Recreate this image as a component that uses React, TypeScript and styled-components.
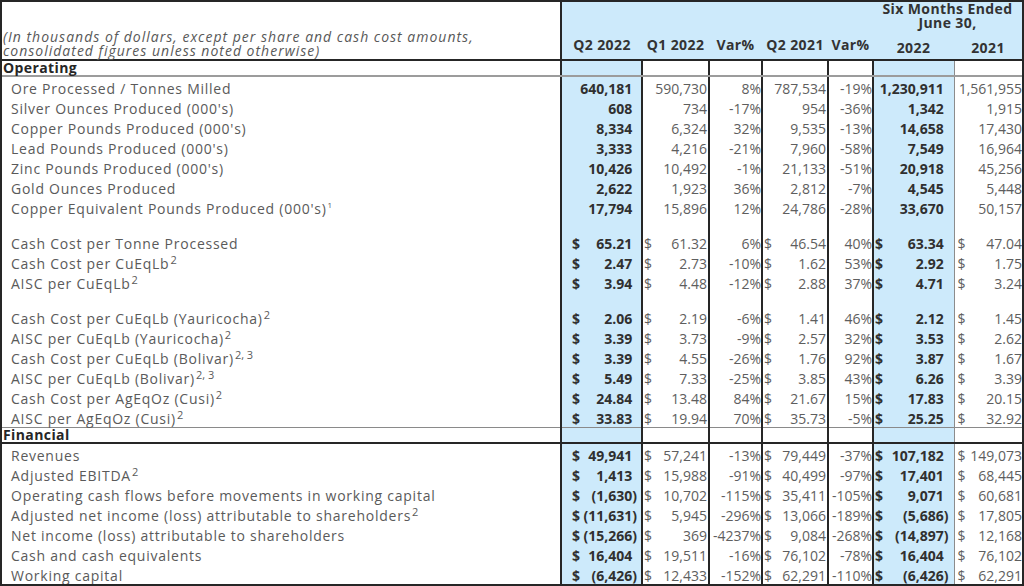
import React from "react";
import styled, { createGlobalStyle, css } from "styled-components";

const BLUE = "#cdeafb";
const DARK = "#262626";
const GRID = `2px solid ${DARK}`;

const GlobalStyle = createGlobalStyle`
  html, body { margin: 0; padding: 0; background: #ffffff; }
  body { font-family: "Open Sans", "Liberation Sans", sans-serif; }
`;

type ColSpec = { w: number; bold: boolean; blue: boolean; pl: number; pr: number; light?: boolean; pct?: boolean };

const COLS: ColSpec[] = [
  { w: 81, bold: true, blue: true, pl: 10, pr: 4 },
  { w: 67, bold: false, blue: false, pl: 1, pr: 1 },
  { w: 53, bold: false, blue: false, pl: 1, pr: 0, pct: true },
  { w: 66, bold: false, blue: false, pl: 1, pr: 1 },
  { w: 45, bold: false, blue: false, pl: 1, pr: 0, pct: true },
  { w: 81, bold: true, blue: true, pl: 1, pr: 5 },
  { w: 68, bold: false, blue: false, pl: 3, pr: 0, light: true },
];

type DataRow = { kind: "data"; label: string; sup?: string; supSmall?: boolean; dollar?: boolean; values: string[] };
type Row = DataRow | { kind: "spacer"; h: number } | { kind: "section"; label: string; variant: "first" | "second"; h: number };

const ROWS: Row[] = [
  { kind: "section", label: "Operating", variant: "first", h: 16 },
  { kind: "data", label: "Ore Processed / Tonnes Milled", values: ["640,181", "590,730", "8%", "787,534", "-19%", "1,230,911", "1,561,955"] },
  { kind: "data", label: "Silver Ounces Produced (000's)", values: ["608", "734", "-17%", "954", "-36%", "1,342", "1,915"] },
  { kind: "data", label: "Copper Pounds Produced (000's)", values: ["8,334", "6,324", "32%", "9,535", "-13%", "14,658", "17,430"] },
  { kind: "data", label: "Lead Pounds Produced (000's)", values: ["3,333", "4,216", "-21%", "7,960", "-58%", "7,549", "16,964"] },
  { kind: "data", label: "Zinc Pounds Produced (000's)", values: ["10,426", "10,492", "-1%", "21,133", "-51%", "20,918", "45,256"] },
  { kind: "data", label: "Gold Ounces Produced", values: ["2,622", "1,923", "36%", "2,812", "-7%", "4,545", "5,448"] },
  { kind: "data", label: "Copper Equivalent Pounds Produced (000's)", sup: "1", supSmall: true, values: ["17,794", "15,896", "12%", "24,786", "-28%", "33,670", "50,157"] },
  { kind: "spacer", h: 15 },
  { kind: "data", label: "Cash Cost per Tonne Processed", dollar: true, values: ["65.21", "61.32", "6%", "46.54", "40%", "63.34", "47.04"] },
  { kind: "data", label: "Cash Cost per CuEqLb", sup: "2", dollar: true, values: ["2.47", "2.73", "-10%", "1.62", "53%", "2.92", "1.75"] },
  { kind: "data", label: "AISC per CuEqLb", sup: "2", dollar: true, values: ["3.94", "4.48", "-12%", "2.88", "37%", "4.71", "3.24"] },
  { kind: "spacer", h: 15 },
  { kind: "data", label: "Cash Cost per CuEqLb (Yauricocha)", sup: "2", dollar: true, values: ["2.06", "2.19", "-6%", "1.41", "46%", "2.12", "1.45"] },
  { kind: "data", label: "AISC per CuEqLb (Yauricocha)", sup: "2", dollar: true, values: ["3.39", "3.73", "-9%", "2.57", "32%", "3.53", "2.62"] },
  { kind: "data", label: "Cash Cost per CuEqLb (Bolivar)", sup: "2, 3", dollar: true, values: ["3.39", "4.55", "-26%", "1.76", "92%", "3.87", "1.67"] },
  { kind: "data", label: "AISC per CuEqLb (Bolivar)", sup: "2, 3", dollar: true, values: ["5.49", "7.33", "-25%", "3.85", "43%", "6.26", "3.39"] },
  { kind: "data", label: "Cash Cost per AgEqOz (Cusi)", sup: "2", dollar: true, values: ["24.84", "13.48", "84%", "21.67", "15%", "17.83", "20.15"] },
  { kind: "data", label: "AISC per AgEqOz (Cusi)", sup: "2", dollar: true, values: ["33.83", "19.94", "70%", "35.73", "-5%", "25.25", "32.92"] },
  { kind: "section", label: "Financial", variant: "second", h: 15 },
  { kind: "data", label: "Revenues", dollar: true, values: ["49,941", "57,241", "-13%", "79,449", "-37%", "107,182", "149,073"] },
  { kind: "data", label: "Adjusted EBITDA", sup: "2", dollar: true, values: ["1,413", "15,988", "-91%", "40,499", "-97%", "17,401", "68,445"] },
  { kind: "data", label: "Operating cash flows before movements in working capital", dollar: true, values: ["(1,630)", "10,702", "-115%", "35,411", "-105%", "9,071", "60,681"] },
  { kind: "data", label: "Adjusted net income (loss) attributable to shareholders", sup: "2", dollar: true, values: ["(11,631)", "5,945", "-296%", "13,066", "-189%", "(5,686)", "17,805"] },
  { kind: "data", label: "Net income (loss) attributable to shareholders", dollar: true, values: ["(15,266)", "369", "-4237%", "9,084", "-268%", "(14,897)", "12,168"] },
  { kind: "data", label: "Cash and cash equivalents", dollar: true, values: ["16,404", "19,511", "-16%", "76,102", "-78%", "16,404", "76,102"] },
  { kind: "data", label: "Working capital", dollar: true, values: ["(6,426)", "12,433", "-152%", "62,291", "-110%", "(6,426)", "62,291"] },
];

const Frame = styled.div`
  width: 1024px;
  box-sizing: border-box;
  border: ${GRID};
  overflow: hidden;
`;

const Table = styled.table`
  width: 100%;
  border-collapse: collapse;
  table-layout: fixed;
  font-size: 14px;
`;

const HeadRow = styled.tr<{ $h: number }>`
  height: ${(p) => p.$h}px;
`;

const NoteCell = styled.th`
  padding: 0 0 1px 1px;
  text-align: left;
  vertical-align: bottom;
  font-style: italic;
  font-weight: 400;
  font-size: 14px;
  line-height: 14px;
  letter-spacing: 1px;
  color: #585858;
  border-right: ${GRID};
  border-bottom: ${GRID};
  white-space: nowrap;
`;

const HeadCell = styled.th<{ $pb: number; $top?: boolean; $bottomLine?: boolean }>`
  background: ${BLUE};
  padding: 0 0 ${(p) => p.$pb}px 0;
  text-align: center;
  vertical-align: ${(p) => (p.$top ? "top" : "bottom")};
  font-weight: 700;
  font-size: 14px;
  line-height: 14px;
  letter-spacing: 0.4px;
  color: #333333;
  white-space: nowrap;
  ${(p) =>
    p.$bottomLine &&
    css`
      border-bottom: ${GRID};
    `}
`;

const BodyRow = styled.tr<{ $h: number }>`
  height: ${(p) => p.$h}px;
`;

const sectionFirst = css`
  border-bottom: 2px solid #9c9c9c;
`;
const sectionSecond = css`
  border-top: 1px solid #8a8a8a;
  border-bottom: ${GRID};
`;

const LabelCell = styled.td<{ $section?: "first" | "second" }>`
  padding: 4px 0 0 9px;
  vertical-align: top;
  border-right: ${GRID};
  color: #5a5a5a;
  line-height: 16px;
  letter-spacing: 0.75px;
  white-space: nowrap;
  overflow: visible;
  ${(p) =>
    p.$section &&
    css`
      padding: 0 0 0 1px;
      vertical-align: middle;
      font-weight: 700;
      color: #262626;
      line-height: 14px;
      letter-spacing: 0.4px;
    `}
  ${(p) => p.$section === "first" && sectionFirst}
  ${(p) => p.$section === "second" && sectionSecond}
`;

const ValueCell = styled.td<{ $spec: ColSpec; $section?: "first" | "second" }>`
  background: ${(p) => (p.$spec.blue ? BLUE : "#ffffff")};
  border-left: ${(p) => (p.$spec.light ? "1px solid #8c8c8c" : GRID)};
  padding: 4px ${(p) => p.$spec.pr}px 0 ${(p) => p.$spec.pl}px;
  vertical-align: top;
  font-weight: ${(p) => (p.$spec.bold ? 700 : 400)};
  color: ${(p) => (p.$spec.bold ? "#303030" : "#5e5e5e")};
  white-space: nowrap;
  overflow: visible;
  ${(p) => p.$section && css`padding-top: 0;`}
  ${(p) => p.$section === "first" && sectionFirst}
  ${(p) => p.$section === "second" && sectionSecond}
`;

const Amount = styled.div`
  display: flex;
  justify-content: flex-end;
  align-items: baseline;
  line-height: 16px;
`;

const Dollar = styled.span`
  flex: none;
  margin-right: auto;
  padding-right: 3px;
`;

const Num = styled.span`
  flex: none;
`;

const Ghost = styled.span`
  visibility: hidden;
`;

const Sup = styled.sup<{ $small?: boolean }>`
  font-size: ${(p) => (p.$small ? 8 : 11)}px;
  line-height: 0;
  letter-spacing: 0;
  vertical-align: ${(p) => (p.$small ? 6 : 5)}px;
  margin-left: 1px;
`;

function Value({ spec, value, dollar }: { spec: ColSpec; value: string; dollar?: boolean }) {
  const neg = value.endsWith(")");
  return (
    <Amount>
      {dollar && !spec.pct && <Dollar>$</Dollar>}
      <Num>
        {value}
        {spec.bold && !neg && <Ghost>)</Ghost>}
      </Num>
    </Amount>
  );
}

export default function App() {
  return (
    <>
      <GlobalStyle />
      <Frame>
        <Table>
          <colgroup>
            <col style={{ width: 559 }} />
            {COLS.map((c, i) => (
              <col key={i} style={{ width: c.w }} />
            ))}
          </colgroup>
          <thead>
            <HeadRow $h={31}>
              <NoteCell rowSpan={2}>
                (In thousands of dollars, except per share and cash cost amounts,
                <br />
                consolidated figures unless noted otherwise)
              </NoteCell>
              <HeadCell rowSpan={2} $pb={7} $bottomLine>Q2 2022</HeadCell>
              <HeadCell rowSpan={2} $pb={7} $bottomLine>Q1 2022</HeadCell>
              <HeadCell rowSpan={2} $pb={7} $bottomLine>Var%</HeadCell>
              <HeadCell rowSpan={2} $pb={7} $bottomLine>Q2 2021</HeadCell>
              <HeadCell rowSpan={2} $pb={7} $bottomLine>Var%</HeadCell>
              <HeadCell colSpan={2} $pb={0} $top>
                Six Months Ended
                <br />
                June 30,
              </HeadCell>
            </HeadRow>
            <HeadRow $h={27}>
              <HeadCell $pb={4} $bottomLine>2022</HeadCell>
              <HeadCell $pb={4} $bottomLine>2021</HeadCell>
            </HeadRow>
          </thead>
          <tbody>
            {ROWS.map((r, i) => {
              if (r.kind === "spacer") {
                return (
                  <BodyRow key={i} $h={r.h}>
                    <LabelCell />
                    {COLS.map((c, j) => (
                      <ValueCell key={j} $spec={c} />
                    ))}
                  </BodyRow>
                );
              }
              if (r.kind === "section") {
                return (
                  <BodyRow key={i} $h={r.h}>
                    <LabelCell $section={r.variant}>{r.label}</LabelCell>
                    {COLS.map((c, j) => (
                      <ValueCell key={j} $spec={c} $section={r.variant} />
                    ))}
                  </BodyRow>
                );
              }
              return (
                <BodyRow key={i} $h={20}>
                  <LabelCell>
                    {r.label}
                    {r.sup && <Sup $small={r.supSmall}>{r.sup}</Sup>}
                  </LabelCell>
                  {COLS.map((c, j) => (
                    <ValueCell key={j} $spec={c}>
                      <Value spec={c} value={r.values[j]} dollar={r.dollar} />
                    </ValueCell>
                  ))}
                </BodyRow>
              );
            })}
          </tbody>
        </Table>
      </Frame>
    </>
  );
}
